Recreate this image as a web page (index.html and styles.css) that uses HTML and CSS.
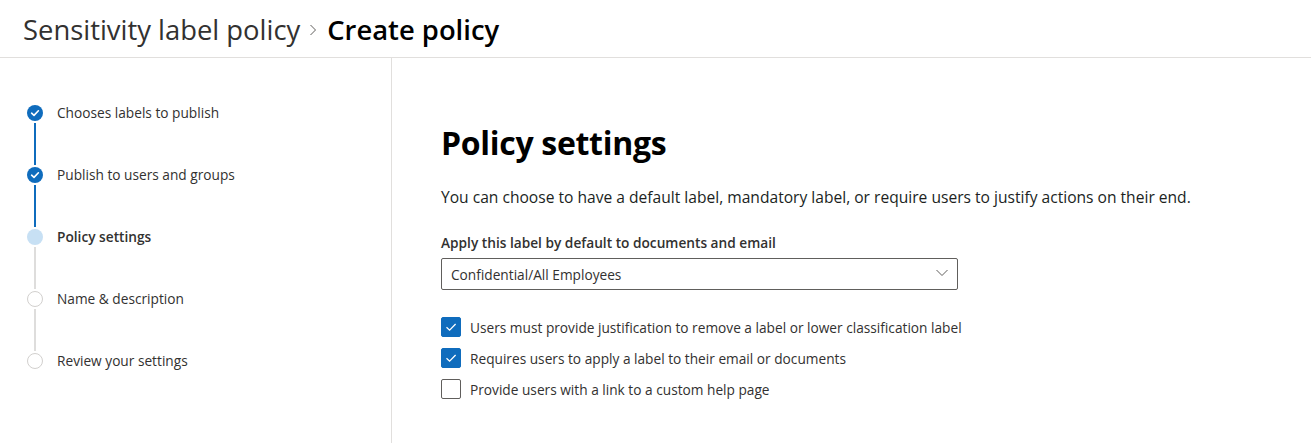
FILE: index.html
```html
<!DOCTYPE html>
<html>
<head>
<meta charset="utf-8">
<link rel="stylesheet" href="styles.css">
</head>
<body>
<header class="header">
  <span class="crumb">Sensitivity label policy</span>
  <svg class="sep" viewBox="0 0 8 12" width="8" height="12"><path d="M1.5 1 L6.5 6 L1.5 11" fill="none" stroke="#605e5c" stroke-width="1"/></svg>
  <span class="current">Create policy</span>
</header>
<div class="body">
  <nav class="steps">
    <div class="step done">
      <div class="marker"><span class="dot"><svg viewBox="0 0 16 16" width="16" height="16"><circle cx="8" cy="8" r="8" fill="#0f6cbd"/><path d="M4.6 8.2 L7 10.4 L11.4 5.8" fill="none" stroke="#fff" stroke-width="1.6" stroke-linecap="round" stroke-linejoin="round"/></svg></span><span class="line blue"></span></div>
      <span class="label">Chooses labels to publish</span>
    </div>
    <div class="step done">
      <div class="marker"><span class="dot"><svg viewBox="0 0 16 16" width="16" height="16"><circle cx="8" cy="8" r="8" fill="#0f6cbd"/><path d="M4.6 8.2 L7 10.4 L11.4 5.8" fill="none" stroke="#fff" stroke-width="1.6" stroke-linecap="round" stroke-linejoin="round"/></svg></span><span class="line blue"></span></div>
      <span class="label">Publish to users and groups</span>
    </div>
    <div class="step active">
      <div class="marker"><span class="dot fill"></span><span class="line"></span></div>
      <span class="label">Policy settings</span>
    </div>
    <div class="step">
      <div class="marker"><span class="dot ring"></span><span class="line"></span></div>
      <span class="label">Name &amp; description</span>
    </div>
    <div class="step last">
      <div class="marker"><span class="dot ring"></span></div>
      <span class="label">Review your settings</span>
    </div>
  </nav>
  <main class="main">
    <h1 class="title">Policy settings</h1>
    <p class="desc">You can choose to have a default label, mandatory label, or require users to justify actions on their end.</p>
    <label class="field-label">Apply this label by default to documents and email</label>
    <div class="select">
      <span>Confidential/All Employees</span>
      <svg class="chev" viewBox="0 0 12 8" width="12" height="8"><path d="M0.5 1 L6 6.5 L11.5 1" fill="none" stroke="#605e5c" stroke-width="1"/></svg>
    </div>
    <div class="checks">
      <div class="check"><span class="box on"><svg viewBox="0 0 20 20" width="20" height="20"><path d="M5.5 10.2 L8.6 13.2 L14.6 7" fill="none" stroke="#fff" stroke-width="1.3"/></svg></span><span>Users must provide justification to remove a label or lower classification label</span></div>
      <div class="check"><span class="box on"><svg viewBox="0 0 20 20" width="20" height="20"><path d="M5.5 10.2 L8.6 13.2 L14.6 7" fill="none" stroke="#fff" stroke-width="1.3"/></svg></span><span>Requires users to apply a label to their email or documents</span></div>
      <div class="check"><span class="box"></span><span>Provide users with a link to a custom help page</span></div>
    </div>
  </main>
</div>
</body>
</html>
```

FILE: styles.css
```css
* { box-sizing: border-box; }
html, body { margin: 0; padding: 0; background: #fff; }
body {
  font-family: "Open Sans", "Noto Sans", sans-serif;
  color: #323130;
  width: 1311px;
  height: 443px;
  overflow: hidden;
}
.header {
  height: 58px;
  border-bottom: 1px solid #e1dfdd;
  display: flex;
  align-items: center;
  padding: 2px 0 0 23px;
}
.crumb { font-size: 27.4px; color: #323130; line-height: 36px; }
.sep { margin: 0 10px 0 9px; flex: none; position: relative; top: 0px; }
.current { font-size: 27.4px; font-weight: 600; color: #000; line-height: 36px; }
.body { display: flex; height: 385px; }
.steps {
  width: 392px;
  border-right: 1px solid #e1dfdd;
  padding: 47px 0 0 27px;
  display: flex;
  flex-direction: column;
}
.step { display: flex; height: 62px; }
.marker { width: 16px; display: flex; flex-direction: column; align-items: center; }
.dot { width: 16px; height: 16px; border-radius: 50%; display: block; flex: none; }
.dot svg { display: block; }
.dot.fill { background: #c7e0f4; }
.dot.ring { border: 1.5px solid #d2d0ce; }
.line { width: 2px; flex: 1; background: #c8c6c4; margin: 2px 0; opacity: 0.6; }
.line.blue { background: #0f6cbd; opacity: 1; }
.label { font-size: 13.7px; margin-left: 14px; line-height: 16px; color: #323130; }
.step.active .label { font-weight: 600; }
.main { padding: 63px 0 0 49px; flex: 1; }
.title { margin: 0; font-size: 32px; font-weight: 700; color: #000; line-height: 44px; letter-spacing: -0.3px; }
.desc { margin: 20px 0 0; font-size: 15.6px; line-height: 24px; color: #201f1e; }
.field-label { display: block; margin-top: 25px; font-size: 13.7px; font-weight: 600; line-height: 18px; color: #323130; }
.select {
  margin-top: 6px;
  width: 517px;
  height: 32px;
  border: 1px solid #605e5c;
  border-radius: 2px;
  display: flex;
  align-items: center;
  justify-content: space-between;
  padding: 0 9px 0 9px;
  font-size: 13.7px;
  color: #323130;
}
.chev { margin-top: -3px; }
.checks { margin-top: 27px; display: flex; flex-direction: column; gap: 11px; }
.check { display: flex; align-items: center; font-size: 13.7px; height: 20px; color: #323130; }
.box {
  width: 20px; height: 20px; border: 1px solid #605e5c; border-radius: 2px; margin-right: 9px; flex: none;
}
.box.on { background: #0f6cbd; border-color: #0f6cbd; }
.box svg { display: block; margin: -1px; }
```
